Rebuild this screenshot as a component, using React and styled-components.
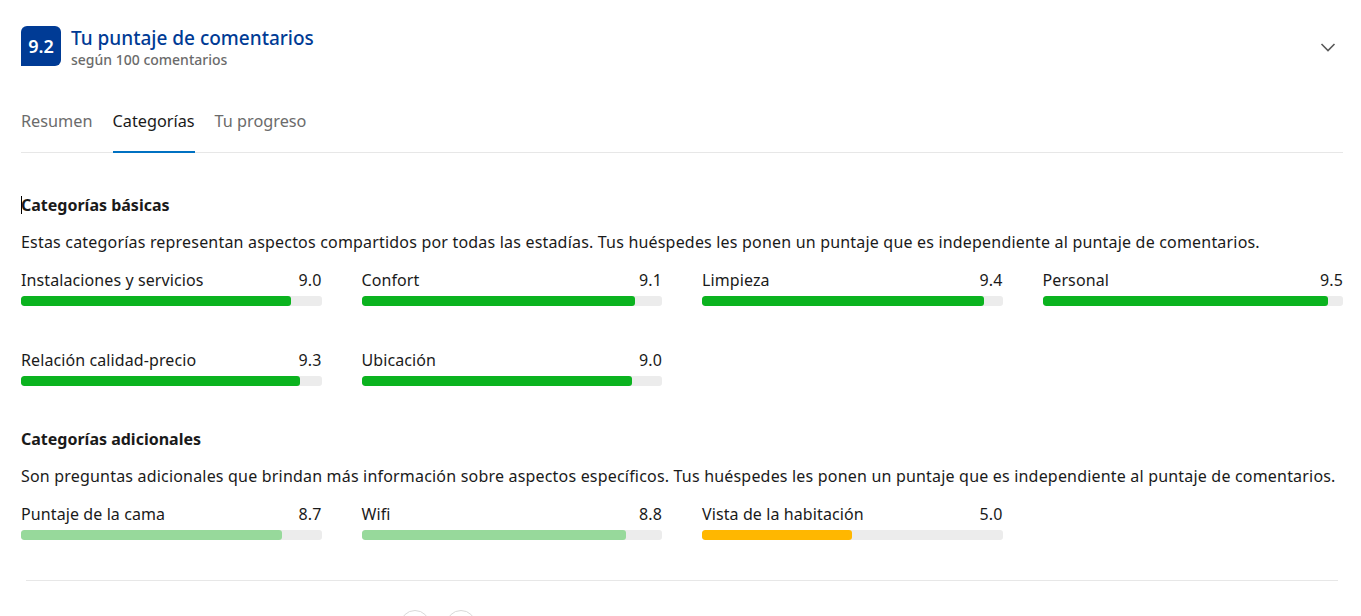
import React from "react";
import styled, { createGlobalStyle } from "styled-components";

const Global = createGlobalStyle`
  html, body { margin: 0; padding: 0; background: #fff; }
  body { font-family: "Noto Sans", "Open Sans", Arial, sans-serif; color: #1a1a1a; }
  * { box-sizing: border-box; }
`;

const Page = styled.div`
  padding: 26px 18px 0 21px;
  width: 1361px;
  height: 616px;
  overflow: hidden;
`;

const Header = styled.div`
  display: flex;
  align-items: flex-start;
  justify-content: space-between;
`;

const HeaderLeft = styled.div`
  display: flex;
  align-items: flex-start;
  gap: 10px;
`;

const Badge = styled.div`
  width: 40px;
  height: 40px;
  background: #003b95;
  color: #fff;
  border-radius: 6px 6px 6px 0;
  display: flex;
  align-items: center;
  justify-content: center;
  font-size: 18px;
  font-weight: 600;
`;

const TitleBox = styled.div`
  display: flex;
  flex-direction: column;
`;

const Title = styled.div`
  font-size: 19px;
  font-weight: 500;
  color: #003b95;
  line-height: 24px;
`;

const Subtitle = styled.div`
  font-size: 14px;
  font-weight: 500;
  color: #6b6b6b;
  line-height: 19px;
`;

const ChevronBtn = styled.div`
  margin-top: 12px;
  margin-right: 6px;
  color: #595959;
  display: flex;
`;

const Tabs = styled.div`
  display: flex;
  gap: 20px;
  margin-top: 26px;
  border-bottom: 1px solid #e7e7e7;
`;

const Tab = styled.div`
  font-size: 16.25px;
  line-height: 24px;
  padding: 14px 0 18px;
  color: ${(p) => (p.$active ? "#1a1a1a" : "#6b6b6b")};
  border-bottom: 2px solid ${(p) => (p.$active ? "#0071c2" : "transparent")};
  margin-bottom: -1px;
`;

const Section = styled.div`
  margin-top: ${(p) => p.$top}px;
`;

const SectionTitle = styled.div`
  font-size: 16px;
  font-weight: 700;
  line-height: 24px;
  position: relative;
`;

const Caret = styled.span`
  position: absolute;
  left: 0;
  top: 3px;
  width: 1px;
  height: 18px;
  background: #000;
`;

const Description = styled.div`
  font-size: 16px;
  line-height: 24px;
  letter-spacing: 0.19px;
  margin-top: 13px;
`;

const Grid = styled.div`
  display: grid;
  grid-template-columns: repeat(4, 300.5px);
  column-gap: 40px;
  row-gap: 42px;
  margin-top: 14px;
`;

const Item = styled.div`
  display: flex;
  flex-direction: column;
  gap: 4px;
`;

const ItemHead = styled.div`
  display: flex;
  justify-content: space-between;
  font-size: 16px;
  line-height: 24px;
  letter-spacing: 0.1px;
`;

const Track = styled.div`
  height: 10px;
  border-radius: 3px;
  background: #ececec;
  overflow: hidden;
`;

const Fill = styled.div`
  height: 100%;
  border-radius: 3px;
  background: ${(p) => p.$color};
`;

const Divider = styled.div`
  height: 1px;
  background: #e7e7e7;
  margin: 40px 5px 0;
`;

const Pager = styled.div`
  display: flex;
  gap: 16px;
  margin-top: 29px;
  padding-left: 379px;
`;

const Circle = styled.div`
  width: 30px;
  height: 30px;
  border-radius: 50%;
  border: 1px solid #d9d9d9;
`;

const basic = [
  ["Instalaciones y servicios", 9.0],
  ["Confort", 9.1],
  ["Limpieza", 9.4],
  ["Personal", 9.5],
  ["Relación calidad-precio", 9.3],
  ["Ubicación", 9.0],
];

const extra = [
  ["Puntaje de la cama", 8.7, "#97d99b"],
  ["Wifi", 8.8, "#97d99b"],
  ["Vista de la habitación", 5.0, "#ffb700"],
];

function Bar({ label, value, color }) {
  return (
    <Item>
      <ItemHead>
        <span>{label}</span>
        <span>{value.toFixed(1)}</span>
      </ItemHead>
      <Track>
        <Fill $color={color} style={{ width: `${value * 10}%` }} />
      </Track>
    </Item>
  );
}

export default function App() {
  return (
    <>
      <Global />
      <Page>
        <Header>
          <HeaderLeft>
            <Badge>9.2</Badge>
            <TitleBox>
              <Title>Tu puntaje de comentarios</Title>
              <Subtitle>según 100 comentarios</Subtitle>
            </TitleBox>
          </HeaderLeft>
          <ChevronBtn>
            <svg width="18" height="18" viewBox="0 0 18 18" fill="none">
              <path d="M2.5 6 L9 12.5 L15.5 6" stroke="currentColor" strokeWidth="1.6" />
            </svg>
          </ChevronBtn>
        </Header>
        <Tabs>
          <Tab>Resumen</Tab>
          <Tab $active>Categorías</Tab>
          <Tab>Tu progreso</Tab>
        </Tabs>
        <Section $top={40}>
          <SectionTitle>
            <Caret />
            Categorías básicas
          </SectionTitle>
          <Description>
            Estas categorías representan aspectos compartidos por todas las estadías. Tus huéspedes les ponen un puntaje que es independiente al puntaje de comentarios.
          </Description>
          <Grid>
            {basic.map(([l, v]) => (
              <Bar key={l} label={l} value={v} color="#0bb31f" />
            ))}
          </Grid>
        </Section>
        <Section $top={41}>
          <SectionTitle>Categorías adicionales</SectionTitle>
          <Description>
            Son preguntas adicionales que brindan más información sobre aspectos específicos. Tus huéspedes les ponen un puntaje que es independiente al puntaje de comentarios.
          </Description>
          <Grid>
            {extra.map(([l, v, c]) => (
              <Bar key={l} label={l} value={v} color={c} />
            ))}
          </Grid>
        </Section>
        <Divider />
        <Pager>
          <Circle />
          <Circle />
        </Pager>
      </Page>
    </>
  );
}
